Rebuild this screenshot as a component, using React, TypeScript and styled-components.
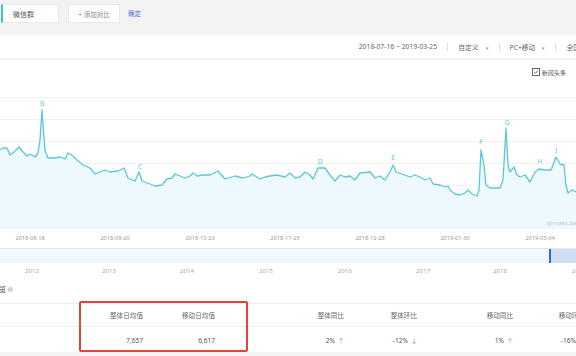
import React from "react";
import styled, { createGlobalStyle } from "styled-components";

const GlobalStyle = createGlobalStyle`
  html, body {
    margin: 0;
    padding: 0;
    background: #f3f3f3;
  }
  body {
    font-family: "Noto Sans", "Noto Sans CJK SC", sans-serif;
    color: #666;
  }
`;

// chart data, in page pixels (x, y)
const points: [number, number][] = [
  [0, 150], [3, 148], [7, 148], [10, 155], [14, 152], [19, 147], [23, 152], [27, 156],
  [30, 154], [35, 157], [38, 153], [40, 140], [42, 110], [43, 125], [45, 150], [48, 158],
  [55, 158], [60, 157], [65, 159], [68, 153], [73, 156], [77, 160], [83, 165], [90, 168],
  [95, 174], [100, 172], [105, 170], [110, 172], [118, 171], [124, 168], [128, 178],
  [135, 181], [139, 172], [142, 181], [150, 184], [155, 186], [162, 185], [167, 179],
  [172, 178], [175, 174], [180, 176], [185, 178], [190, 176], [193, 173], [197, 176],
  [203, 175], [210, 175], [218, 171], [225, 179], [235, 176], [243, 178], [250, 176],
  [252, 174], [260, 179], [265, 177], [270, 176], [277, 175], [285, 177], [290, 173],
  [295, 178], [300, 177], [305, 172], [310, 175], [313, 179], [318, 168], [325, 168],
  [330, 175], [335, 181], [340, 175], [345, 177], [350, 176], [355, 180], [360, 173],
  [370, 172], [375, 178], [380, 176], [385, 180], [390, 172], [393, 165], [396, 172],
  [402, 174], [410, 177], [415, 175], [420, 177], [425, 180], [430, 178], [433, 184],
  [440, 185], [445, 187], [448, 186], [450, 190], [455, 194], [460, 195], [465, 193],
  [468, 190], [472, 194], [477, 196], [479, 190], [481, 150], [483, 160], [484, 166],
  [486, 185], [490, 188], [500, 188], [503, 180], [506, 128], [508, 165], [510, 172],
  [514, 167], [517, 175], [520, 177], [525, 175], [530, 182], [535, 172], [539, 169],
  [545, 170], [551, 170], [556, 157], [560, 164], [564, 165], [566, 185], [568, 193],
  [572, 190], [576, 192],
];

const markers = [
  { l: "B", x: 42, y: 104 },
  { l: "C", x: 140, y: 167 },
  { l: "D", x: 320, y: 162 },
  { l: "E", x: 393, y: 158 },
  { l: "F", x: 481, y: 142 },
  { l: "G", x: 507, y: 123 },
  { l: "H", x: 540, y: 162 },
  { l: "I", x: 556, y: 151 },
];

const xLabels = [
  { t: "2018-08-18", x: 30 },
  { t: "2018-09-20", x: 115 },
  { t: "2018-10-23", x: 200 },
  { t: "2018-11-25", x: 285 },
  { t: "2018-12-28", x: 370 },
  { t: "2019-01-30", x: 455 },
  { t: "2019-03-04", x: 540 },
];

const years = [
  { t: "2012", x: 32 },
  { t: "2013", x: 109 },
  { t: "2014", x: 187 },
  { t: "2015", x: 266 },
  { t: "2016", x: 345 },
  { t: "2017", x: 423 },
  { t: "2018", x: 500 },
  { t: "2019", x: 579 },
];

const gridY = [97, 119, 141, 163, 185, 207];
const BASE = 229;

const linePath = points.map(([x, y], i) => `${i ? "L" : "M"}${x} ${y}`).join(" ");
const areaPath = `${linePath} L576 ${BASE} L0 ${BASE} Z`;

const stats = [
  { title: "整体日均值", value: "7,657" },
  { title: "移动日均值", value: "6,617" },
  { title: "整体同比", value: "2%", trend: "up" },
  { title: "整体环比", value: "-12%", trend: "down" },
  { title: "移动同比", value: "1%", trend: "up" },
  { title: "移动环比", value: "-16%", trend: "down" },
];

export default function App() {
  return (
    <>
      <GlobalStyle />
      <Page>
        <TopBar>
          <KeywordBox>微信群</KeywordBox>
          <AddCompare>+ 添加对比</AddCompare>
          <Confirm>确定</Confirm>
        </TopBar>

        <Panel>
          <FilterRow>
            <FilterText>2018-07-16 ~ 2019-03-25</FilterText>
            <Sep />
            <FilterText>
              自定义<Caret>▾</Caret>
            </FilterText>
            <Sep />
            <FilterText>
              PC+移动<Caret>▾</Caret>
            </FilterText>
            <Sep />
            <FilterText>
              全国<Caret>▾</Caret>
            </FilterText>
          </FilterRow>
          <Divider />

          <LegendRow>
            <CheckBox>
              <svg width="6" height="6" viewBox="0 0 6 6">
                <path d="M1.2 3.1 L2.5 4.3 L4.9 1.6" fill="none" stroke="#555" strokeWidth="0.9" />
              </svg>
            </CheckBox>
            <LegendText>新闻头条</LegendText>
            <Sep />
          </LegendRow>

          <ChartSvg width="576" height="162" viewBox="0 84 576 162">
            {gridY.map((y) => (
              <line key={y} x1="0" x2="576" y1={y + 0.5} y2={y + 0.5} stroke="#f1f1f1" strokeWidth="1" />
            ))}
            <path d={areaPath} fill="#edf9fd" />
            <path d={linePath} fill="none" stroke="#5cc7d7" strokeWidth="1.3" strokeLinejoin="round" />
            {markers.map((m) => (
              <text key={m.l} x={m.x} y={m.y} fontSize="6.5" fill="#5cc7d7" textAnchor="middle" dominantBaseline="middle">
                {m.l}
              </text>
            ))}
            <text x="547" y="223" fontSize="6" fill="#c8c8c8" dominantBaseline="middle">
              @index.baidu.com
            </text>
            {xLabels.map((l) => (
              <text key={l.t} x={l.x} y="238" fontSize="5.6" fill="#9a9a9a" textAnchor="middle" dominantBaseline="middle">
                {l.t}
              </text>
            ))}
          </ChartSvg>

          <Overview>
            <Selected />
            <Handle />
          </Overview>
          <YearRow>
            {years.map((y) => (
              <YearLabel key={y.t} style={{ left: y.x }}>
                {y.t}
              </YearLabel>
            ))}
          </YearRow>

          <SectionTitle>
            概览
            <InfoDot>?</InfoDot>
          </SectionTitle>

          <Table>
            <Highlight />
            <HeadRow>
              <Cell />
              {stats.map((s) => (
                <Cell key={s.title}>{s.title}</Cell>
              ))}
            </HeadRow>
            <ValueRow>
              <Cell />
              {stats.map((s) => (
                <Cell key={s.title}>
                  {s.value}
                  {s.trend && <Arrow $up={s.trend === "up"}>{s.trend === "up" ? "↑" : "↓"}</Arrow>}
                </Cell>
              ))}
            </ValueRow>
          </Table>
        </Panel>
      </Page>
    </>
  );
}

const Page = styled.div`
  width: 576px;
  height: 356px;
  overflow: hidden;
  background: #f3f3f3;
`;

const TopBar = styled.div`
  height: 35px;
  box-sizing: border-box;
  display: flex;
  align-items: flex-start;
  padding-top: 4px;
  font-size: 6.5px;
`;

const KeywordBox = styled.div`
  width: 58px;
  height: 19px;
  box-sizing: border-box;
  margin-left: 1px;
  background: #fff;
  border: 1px solid #e8e8e8;
  border-left: 2px solid #3fc3c9;
  padding-left: 10px;
  display: flex;
  align-items: center;
  color: #555;
  font-size: 7px;
`;

const AddCompare = styled.div`
  width: 52px;
  height: 19px;
  box-sizing: border-box;
  margin-left: 9px;
  background: #fff;
  border: 1px solid #e8e8e8;
  display: flex;
  align-items: center;
  justify-content: center;
  color: #888;
`;

const Confirm = styled.div`
  margin-left: 8px;
  line-height: 19px;
  color: #4a6fd8;
`;

const Panel = styled.div`
  width: 600px;
  height: 317px;
  background: #fff;
`;

const FilterRow = styled.div`
  height: 23px;
  display: flex;
  align-items: center;
  justify-content: flex-end;
  padding-right: 10px;
  font-size: 6.8px;
  color: #666;
`;

const FilterText = styled.span`
  white-space: nowrap;
`;

const Caret = styled.span`
  margin-left: 7px;
  font-size: 5px;
  color: #999;
`;

const Sep = styled.span`
  width: 1px;
  height: 8px;
  background: #dedede;
  margin: 0 10px;
`;

const Divider = styled.div`
  height: 2px;
  background: #f2f2f2;
`;

const LegendRow = styled.div`
  height: 24px;
  display: flex;
  align-items: center;
  justify-content: flex-end;
  padding-right: 13px;
  font-size: 6.1px;
  color: #555;
`;

const CheckBox = styled.span`
  width: 6px;
  height: 6px;
  border: 0.8px solid #666;
  display: flex;
  align-items: center;
  justify-content: center;
  margin-right: 2px;
`;

const LegendText = styled.span``;

const ChartSvg = styled.svg`
  display: block;
  font-family: "Noto Sans", sans-serif;
`;

const Overview = styled.div`
  position: relative;
  width: 576px;
  height: 14px;
  margin-top: 2px;
  background: linear-gradient(#f4f9fd, #eef5fb);
  border-top: 1px solid #e1e9f1;
`;

const Selected = styled.div`
  position: absolute;
  left: 551px;
  top: 0;
  bottom: 0;
  right: 0;
  background: #cfe0f5;
`;

const Handle = styled.div`
  position: absolute;
  left: 549px;
  top: 0;
  bottom: 0;
  width: 2px;
  background: #2e6bd0;
`;

const YearRow = styled.div`
  position: relative;
  width: 576px;
  height: 16px;
`;

const YearLabel = styled.span`
  position: absolute;
  top: 4px;
  transform: translateX(-50%);
  font-size: 6.1px;
  line-height: 8px;
  color: #a8a8a8;
`;

const SectionTitle = styled.div`
  height: 20px;
  display: flex;
  align-items: center;
  margin-left: -8px;
  font-size: 7px;
  color: #444;
`;

const InfoDot = styled.span`
  width: 5px;
  height: 5px;
  border-radius: 50%;
  background: #d0d0d0;
  color: #fff;
  font-size: 4px;
  line-height: 5px;
  text-align: center;
  margin-left: 2px;
`;

const Table = styled.div`
  position: relative;
  margin-top: 4px;
  border-top: 1px solid #efefef;
`;

const Highlight = styled.div`
  position: absolute;
  left: 79px;
  top: -3px;
  width: 169px;
  height: 51px;
  box-sizing: border-box;
  border: 2px solid #e0443d;
  border-radius: 2px;
`;

const Row = styled.div`
  display: grid;
  grid-template-columns: 80px 63px 72px 129px 73px 96px 72px;
  align-items: center;
  font-size: 6.6px;
`;

const HeadRow = styled(Row)`
  height: 22px;
  border-bottom: 1px solid #efefef;
  color: #666;
`;

const ValueRow = styled(Row)`
  height: 26px;
  color: #555;
`;

const Cell = styled.div`
  text-align: right;
  white-space: nowrap;
`;

const Arrow = styled.span<{ $up: boolean }>`
  margin-left: 3px;
  font-size: 6px;
  color: ${({ $up }) => ($up ? "#f26a45" : "#2fb07f")};
`;
